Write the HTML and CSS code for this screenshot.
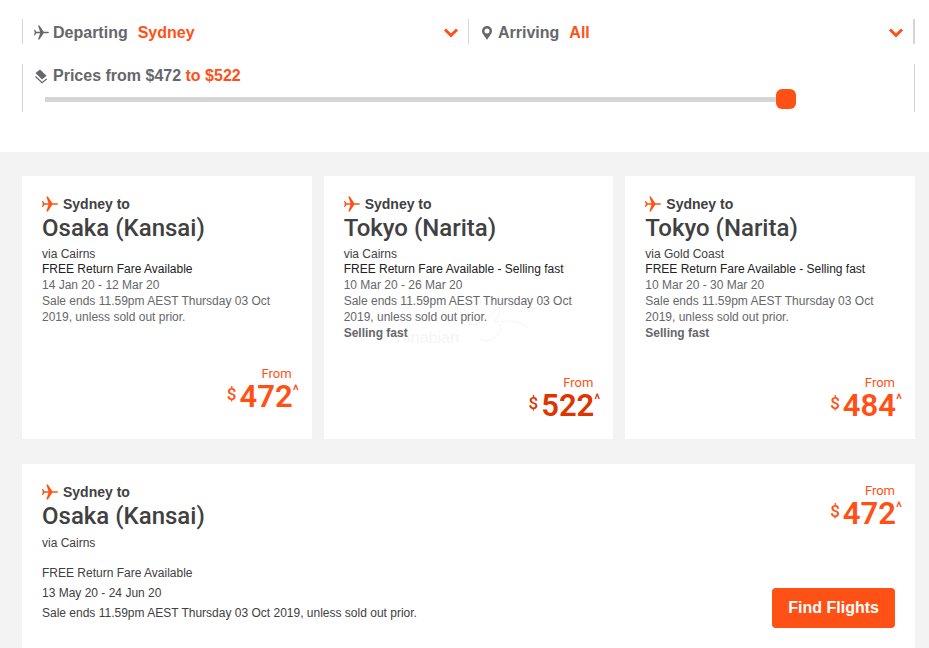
FILE: index.html
```html
<!DOCTYPE html>
<html lang="en">

<head>
    <meta charset="UTF-8">
    <meta name="viewport" content="width=device-width, initial-scale=1.0">
    <title>Flight Deals from Sydney</title>
    <link rel="stylesheet" href="styles.css">
</head>

<body>
    <!-- Shared icons -->
    <svg class="sprite" aria-hidden="true">
        <symbol id="plane" viewBox="0 0 16 16">
            <path d="M0 5h1l1.500 2.300h4L4.300.6h1.500l4.500 6.700h4.300c.8 0 1.400.3 1.400.7s-.6.7-1.400.7h-4.300l-4.500 6.700H4.300l2.200-6.700h-4L1 11H0l.8-3z" />
        </symbol>
        <symbol id="chevron" viewBox="0 0 14 10">
            <path d="M1 1.500l6 6 6-6" fill="none" stroke="currentColor" stroke-width="3" />
        </symbol>
    </svg>

    <form class="filters">
        <div class="filter-row">
            <div class="filter">
                <svg class="icon"><use href="#plane" /></svg>
                <label for="departing">Departing</label>
                <select id="departing">
                    <option>Sydney</option>
                    <option>Melbourne</option>
                </select>
                <svg class="chevron"><use href="#chevron" /></svg>
            </div>
            <div class="filter arriving">
                <svg class="pin" viewBox="0 0 10 14">
                    <path fill-rule="evenodd" d="M5 0a5 5 0 0 1 5 5c0 3-3.300 5.500-5 9C3.300 10.500 0 8 0 5a5 5 0 0 1 5-5zm0 2.400a2.500 2.500 0 1 0 0 5 2.500 2.500 0 0 0 0-5z" />
                </svg>
                <label for="arriving">Arriving</label>
                <select id="arriving">
                    <option>All</option>
                    <option>Osaka</option>
                    <option>Tokyo</option>
                </select>
                <svg class="chevron"><use href="#chevron" /></svg>
            </div>
        </div>
        <div class="price-filter">
            <div class="price-label">
                <svg class="tags" viewBox="0 0 12 15">
                    <path d="M.5 4L5 .5l6.500 6.300L7 10.500z" />
                    <path d="M.5 7.500L7 13.700l4.700-3.800" fill="none" stroke="currentColor" stroke-width="1.200" />
                </svg>
                <label for="price">Prices from $472 <span>to $522</span></label>
            </div>
            <input type="range" id="price" min="472" max="522" value="522">
        </div>
    </form>

    <main class="deals">
        <div class="cards">
            <article class="card standard">
                <p class="origin"><svg class="icon"><use href="#plane" /></svg>Sydney to</p>
                <h2>Osaka (Kansai)</h2>
                <p class="via">via Cairns</p>
                <p class="offer">FREE Return Fare Available</p>
                <p>14 Jan 20 - 12 Mar 20</p>
                <p>Sale ends 11.59pm AEST Thursday 03 Oct 2019, unless sold out prior.</p>
                <div class="fare">
                    <span class="from">From</span>
                    <div class="amount"><sup>$</sup>472<sup class="caret">^</sup></div>
                </div>
            </article>

            <article class="card active">
                <p class="origin"><svg class="icon"><use href="#plane" /></svg>Sydney to</p>
                <h2>Tokyo (Narita)</h2>
                <p class="via">via Cairns</p>
                <p class="offer">FREE Return Fare Available - Selling fast</p>
                <p>10 Mar 20 - 26 Mar 20</p>
                <p>Sale ends 11.59pm AEST Thursday 03 Oct 2019, unless sold out prior.</p>
                <p class="selling">Selling fast</p>
                <div class="fare">
                    <span class="from">From</span>
                    <div class="amount"><sup>$</sup>522<sup class="caret">^</sup></div>
                </div>
                <div class="watermark">
                    <span>Hinabian</span>
                    <svg viewBox="0 0 64 44">
                        <path d="M2 22q8 2 16-4T32 4q4 8-6 16 6-2 8 6-2 8-10 12-6 2-12-1M34 20q14-4 28 6" fill="none" stroke="currentColor" />
                    </svg>
                </div>
            </article>

            <article class="card">
                <p class="origin"><svg class="icon"><use href="#plane" /></svg>Sydney to</p>
                <h2>Tokyo (Narita)</h2>
                <p class="via">via Gold Coast</p>
                <p class="offer">FREE Return Fare Available - Selling fast</p>
                <p>10 Mar 20 - 30 Mar 20</p>
                <p>Sale ends 11.59pm AEST Thursday 03 Oct 2019, unless sold out prior.</p>
                <p class="selling">Selling fast</p>
                <div class="fare">
                    <span class="from">From</span>
                    <div class="amount"><sup>$</sup>484<sup class="caret">^</sup></div>
                </div>
            </article>
        </div>

        <article class="card expanded">
            <div>
                <p class="origin"><svg class="icon"><use href="#plane" /></svg>Sydney to</p>
                <h2>Osaka (Kansai)</h2>
                <p class="via">via Cairns</p>
                <div class="details">
                    <p>FREE Return Fare Available</p>
                    <p>13 May 20 - 24 Jun 20</p>
                    <p>Sale ends 11.59pm AEST Thursday 03 Oct 2019, unless sold out prior.</p>
                </div>
            </div>
            <div class="booking">
                <div class="fare">
                    <span class="from">From</span>
                    <div class="amount"><sup>$</sup>472<sup class="caret">^</sup></div>
                </div>
                <button type="button">Find Flights</button>
            </div>
        </article>
    </main>
</body>

</html>
```
FILE: styles.css
```css
* {
    box-sizing: border-box;
}

body {
    margin: 0;
    font-family: "Liberation Sans", Arial, sans-serif;
    font-size: 12px;
    line-height: 16px;
    color: #414042;
    background: #fff;
}

h2,
p {
    margin: 0;
}

svg {
    flex: none;
    fill: currentColor;
}

.sprite {
    display: none;
}

/* Filters */
.filters {
    padding: 19px 14px 40px 22px;
    font-size: 16px;
    font-weight: bold;
    color: #66676a;
}

.filter-row {
    display: grid;
    grid-template-columns: 1fr 1fr;
    height: 25px;
    border-left: 1px solid #d4d5d7;
    border-right: 2px solid #d4d5d7;
}

.filter {
    display: flex;
    align-items: center;
    position: relative;
    padding: 2px 10px 0 11px;
}

.arriving {
    border-left: 1px solid #d4d5d7;
    padding-left: 13px;
}

.icon {
    width: 16px;
    height: 16px;
}

.filter .icon {
    width: 15px;
    height: 15px;
    margin-right: 4px;
}

.pin {
    width: 10px;
    height: 14px;
    margin-right: 6px;
}

.filter select {
    flex: 1;
    min-width: 0;
    margin-left: 10px;
    padding: 0;
    border: none;
    background: none;
    appearance: none;
    font: inherit;
    color: #ff5115;
}

.chevron {
    position: absolute;
    right: 10px;
    top: 9px;
    width: 14px;
    height: 10px;
    color: #ff5115;
    pointer-events: none;
}

.price-filter {
    height: 48px;
    margin-top: 20px;
    padding-left: 12px;
    border-left: 1px solid #d4d5d7;
    border-right: 1px solid #d4d5d7;
}

.price-label {
    display: flex;
    align-items: center;
    height: 24px;
}

.price-label span {
    color: #ff5115;
}

.tags {
    width: 12px;
    height: 15px;
    margin-right: 6px;
}

input[type="range"] {
    display: block;
    width: calc(100% - 128px);
    height: 20px;
    margin: 1px 0 0 10px;
    background: none;
    appearance: none;
}

input[type="range"]::-webkit-slider-runnable-track {
    height: 5px;
    background: #d4d5d7;
}

input[type="range"]::-webkit-slider-thumb {
    appearance: none;
    width: 20px;
    height: 20px;
    margin-top: -8px;
    border-radius: 6px;
    background: #ff5115;
}

/* Deals */
.deals {
    padding: 24px 14px 0 22px;
    background: #f3f3f3;
}

.cards {
    display: grid;
    grid-template-columns: repeat(3, 1fr);
    gap: 12px;
    margin-bottom: 25px;
}

.card {
    display: flex;
    flex-direction: column;
    position: relative;
    isolation: isolate;
    min-height: 263px;
    padding: 20px 20px 17px;
    background: #fff;
    color: #66676a;
}

.origin {
    display: flex;
    align-items: center;
    gap: 5px;
    font-size: 14px;
    font-weight: bold;
    color: #414042;
}

.origin .icon {
    color: #ff5115;
}

h2 {
    font-family: Roboto, sans-serif;
    font-size: 24px;
    font-weight: 500;
    line-height: 32px;
    color: #414042;
}

.via {
    margin-top: 2px;
    color: #414042;
}

.offer {
    line-height: 15px;
    color: #222;
}

.selling {
    font-weight: bold;
}

.fare {
    margin-top: auto;
    text-align: right;
    font-family: Roboto, sans-serif;
    color: #ff5115;
}

.standard .fare {
    padding-bottom: 9px;
}

.from {
    display: block;
    font-size: 13px;
    line-height: 14px;
}

.amount {
    display: flex;
    justify-content: flex-end;
    margin-right: -7px;
    font-size: 31px;
    font-weight: 600;
    line-height: 32px;
}

.amount sup {
    margin-right: 3px;
    font-size: 17px;
    font-weight: 500;
    line-height: 26px;
}

.amount .caret {
    margin: 0;
    font-size: 14px;
    line-height: 18px;
}

.active .amount {
    color: #dc3500;
}

/* Faint mark behind the card text */
.watermark {
    display: flex;
    align-items: flex-end;
    gap: 8px;
    position: absolute;
    z-index: -1;
    left: 72px;
    top: 126px;
    font-size: 16px;
    color: #f5f5f5;
}

.watermark svg {
    width: 64px;
    height: 44px;
}

.expanded {
    flex-direction: row;
    justify-content: space-between;
    min-height: 184px;
    padding-bottom: 20px;
    color: #414042;
}

.expanded .via {
    margin-top: 3px;
}

.details {
    margin-top: 12px;
    line-height: 20px;
}

.booking {
    display: flex;
    flex-direction: column;
    justify-content: space-between;
    align-items: flex-end;
}

.booking .fare {
    margin-top: 0;
}

button {
    height: 40px;
    padding: 0 16px;
    border: none;
    border-radius: 4px;
    background: #ff5115;
    font: bold 16px "Liberation Sans", Arial, sans-serif;
    color: #fff;
    cursor: pointer;
}
```
